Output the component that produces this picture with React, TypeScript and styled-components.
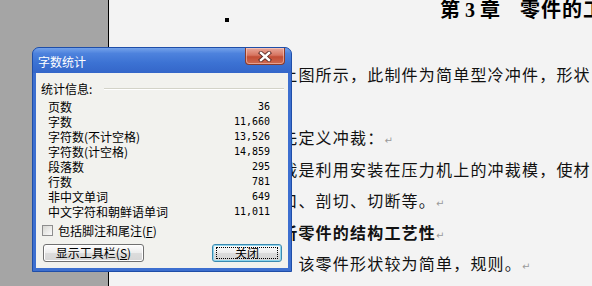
import React from 'react';
import styled, {createGlobalStyle} from 'styled-components';

const GlobalStyle = createGlobalStyle`
  html, body {
    margin: 0;
    padding: 0;
    width: 592px;
    height: 286px;
    overflow: hidden;
  }
`

const Desktop = styled.div`
  position: relative;
  display: flex;
  width: 592px;
  height: 286px;
  overflow: hidden;
`

const GrayPane = styled.div`
  width: 108px;
  flex-shrink: 0;
  background-color: #a5a5a5;
`

const Page = styled.div`
  flex: 1;
  background-color: #f3f3f3;
  border-left: 1px solid #000;
  overflow: hidden;
  font-family: "Noto Sans CJK SC", sans-serif;
  color: #111;
`

const HeadingRow = styled.div`
  display: flex;
  align-items: flex-start;
  height: 22px;
`

const Marker = styled.div`
  width: 4px;
  height: 4px;
  margin: 18px 0 0 116px;
  background-color: #000;
  flex-shrink: 0;
`

const Heading = styled.div`
  margin-left: 211px;
  font-family: "Liberation Serif", "Noto Sans CJK SC", serif;
  font-size: 20px;
  font-weight: 700;
  line-height: 20px;
  white-space: nowrap;
  color: #000;
`

const HeadingTitle = styled.span`
  margin-left: 20px;
  letter-spacing: 1px;
`

const DocBody = styled.div`
  margin-top: 37px;
`

const Line = styled.div<{ $bold?: boolean }>`
  padding-left: 155px;
  font-size: 16px;
  line-height: 31.5px;
  height: 31.5px;
  letter-spacing: 1.2px;
  white-space: nowrap;
  font-weight: ${({$bold}) => ($bold ? 700 : 400)};
`

const ReturnMark = styled.span`
  font-family: "DejaVu Sans", sans-serif;
  font-size: 10px;
  font-weight: 400;
  color: #9a9a9a;
  letter-spacing: 0;
`

const Dialog = styled.div`
  position: absolute;
  left: 32px;
  top: 47px;
  width: 260px;
  height: 225px;
  box-sizing: border-box;
  display: flex;
  flex-direction: column;
  border: 1px solid #1f4ea8;
  border-radius: 7px 7px 0 0;
  background-color: #3d6fcf;
  font-family: "Noto Sans CJK SC", sans-serif;
  font-size: 12px;
  color: #000;
`

const TitleBar = styled.div`
  display: flex;
  justify-content: space-between;
  align-items: flex-start;
  height: 25px;
  flex-shrink: 0;
  padding: 0 6px 0 5px;
  border-radius: 6px 6px 0 0;
  background: linear-gradient(#74a2ea 0%, #4d82dd 22%, #3c72d3 60%, #3466c9 100%);
`

const TitleText = styled.span`
  align-self: center;
  margin-top: 3px;
  color: #fff;
  font-size: 12px;
  line-height: 14px;
`

const CloseButton = styled.div`
  width: 40px;
  height: 17px;
  box-sizing: border-box;
  display: flex;
  align-items: center;
  justify-content: center;
  border: 1px solid #8b3b2c;
  border-top: none;
  border-radius: 0 0 4px 4px;
  background: linear-gradient(#e9a89a 0%, #d77561 45%, #c24d35 55%, #cf6a52 100%);
  box-shadow: inset 0 0 0 1px rgba(255, 220, 210, 0.5);
`

const Body = styled.div`
  flex: 1;
  display: flex;
  flex-direction: column;
  margin: 0 3px 3px;
  padding: 8px 4px 0 5px;
  background-color: #f2f2ee;
`

const GroupHeader = styled.div`
  display: flex;
  align-items: center;
  gap: 12px;
  line-height: 15px;
  height: 15px;
`

const Etched = styled.div`
  flex: 1;
  height: 0;
  border-top: 1px solid #d3d3c8;
  border-bottom: 1px solid #fff;
`

const StatList = styled.div`
  margin: 3px 14px 0 7px;
`

const StatRow = styled.div`
  display: flex;
  justify-content: space-between;
  align-items: center;
  height: 15px;
  line-height: 15px;
`

const StatValue = styled.span`
  font-family: "DejaVu Sans Mono", monospace;
  font-size: 10px;
`

const CheckRow = styled.label`
  display: flex;
  align-items: center;
  gap: 5px;
  height: 15px;
  margin: 4px 0 0 1px;
`

const CheckBox = styled.span`
  width: 11px;
  height: 11px;
  box-sizing: border-box;
  border: 1px solid #8e8e8e;
  background: linear-gradient(135deg, #d8d8d3, #fbfbfb);
`

const ButtonRow = styled.div`
  display: flex;
  justify-content: space-between;
  margin-top: 6px;
  padding: 0 2px;
`

const Button = styled.div<{ $width: number; $focused?: boolean }>`
  width: ${({$width}) => $width}px;
  height: 18px;
  box-sizing: border-box;
  display: flex;
  align-items: center;
  justify-content: center;
  border: 1px solid ${({$focused}) => ($focused ? '#3b8ab0' : '#707070')};
  border-radius: 3px;
  background: linear-gradient(#fdfdfd 0%, #ececec 50%, #dcdcdc 51%, #d6d6d6 100%);
  box-shadow: ${({$focused}) => ($focused ? 'inset 0 0 0 1px #8fd6ee' : 'inset 0 0 0 1px #fff')};
  line-height: 14px;
`

const FocusRing = styled.span`
  display: flex;
  align-items: center;
  justify-content: center;
  width: calc(100% - 6px);
  height: 12px;
  border: 1px dotted #000;
  box-sizing: border-box;
`

const Key = styled.span`
  text-decoration: underline;
`

const stats: [string, string][] = [
    ['页数', '36'],
    ['字数', '11,660'],
    ['字符数(不计空格)', '13,526'],
    ['字符数(计空格)', '14,859'],
    ['段落数', '295'],
    ['行数', '781'],
    ['非中文单词', '649'],
    ['中文字符和朝鲜语单词', '11,011'],
]

const CloseGlyph = () => (
    <svg width="14" height="11" viewBox="0 0 14 11">
        <path d="M3 2 L11 9 M11 2 L3 9" stroke="#5a2a26" strokeWidth="4.2" strokeLinecap="square"/>
        <path d="M3 2 L11 9 M11 2 L3 9" stroke="#fff" strokeWidth="2.4" strokeLinecap="square"/>
    </svg>
)

const WordCountDialog = () => (
    <Dialog>
        <TitleBar>
            <TitleText>字数统计</TitleText>
            <CloseButton><CloseGlyph/></CloseButton>
        </TitleBar>
        <Body>
            <GroupHeader>
                <span>统计信息:</span>
                <Etched/>
            </GroupHeader>
            <StatList>
                {stats.map(([label, value]) => (
                    <StatRow key={label}>
                        <span>{label}</span>
                        <StatValue>{value}</StatValue>
                    </StatRow>
                ))}
            </StatList>
            <CheckRow>
                <CheckBox/>
                <span>包括脚注和尾注(<Key>F</Key>)</span>
            </CheckRow>
            <ButtonRow>
                <Button $width={101}>显示工具栏(<Key>S</Key>)</Button>
                <Button $width={70} $focused><FocusRing>关闭</FocusRing></Button>
            </ButtonRow>
        </Body>
    </Dialog>
)

const App = () => {
    return (
        <>
            <GlobalStyle/>
            <Desktop>
                <GrayPane/>
                <Page>
                    <HeadingRow>
                        <Marker/>
                        <Heading>第 3 章<HeadingTitle>零件的工艺分析</HeadingTitle></Heading>
                    </HeadingRow>
                    <DocBody>
                        <Line>如上图所示，此制件为简单型冷冲件，形状</Line>
                        <Line/>
                        <Line>首先定义冲裁：<ReturnMark>↵</ReturnMark></Line>
                        <Line>冲裁是利用安装在压力机上的冲裁模，使材</Line>
                        <Line>切口、剖切、切断等。<ReturnMark>↵</ReturnMark></Line>
                        <Line $bold>分析零件的结构工艺性<ReturnMark>↵</ReturnMark></Line>
                        <Line>　　该零件形状较为简单，规则。<ReturnMark>↵</ReturnMark></Line>
                    </DocBody>
                </Page>
                <WordCountDialog/>
            </Desktop>
        </>
    );
};

export default App;
